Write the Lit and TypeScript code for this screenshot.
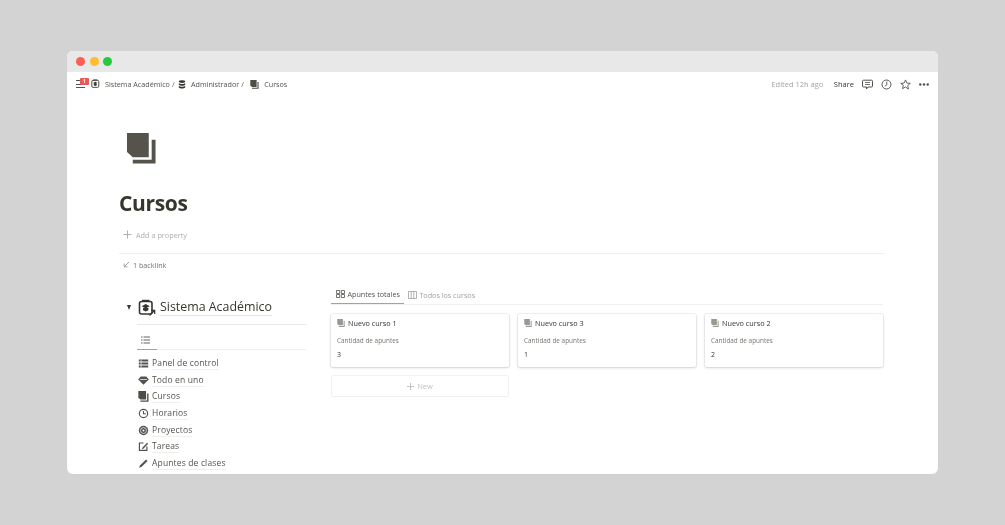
import { LitElement, html, css, svg } from "lit";
import { customElement } from "lit/decorators.js";

const copyIcon = (size: number, color: string) => html`<svg class="ic" width=${size} height=${size} viewBox="0 0 30 32" style="color:${color}"><path fill="currentColor" d="M0 0H22.500V25H6L0 19.500Z"/><path fill="currentColor" d="M25.500 7H29.500V31.500H6V27.500H25.500Z"/></svg>`;

const icons: Record<string, unknown> = {
  panel: svg`<path fill="currentColor" d="M1 2h12v2.400H1zM1 5.800h12v2.400H1zM1 9.600h12V12H1z"/><path fill="#fff" d="M3.500 2h.8v10h-.8z"/>`,
  todo: svg`<path fill="currentColor" d="M3.500 2h7L13.800 5.800 7 12.500 .2 5.800z"/><path fill="#fff" d="M2.500 5.400h9v.9h-9z"/>`,
  clock: svg`<circle cx="7" cy="7" r="5.300" fill="none" stroke="currentColor" stroke-width="1.500"/><path d="M7 3.800V7.300H10" fill="none" stroke="currentColor" stroke-width="1.300"/>`,
  target: svg`<circle cx="7" cy="7" r="6" fill="currentColor"/><circle cx="7" cy="7" r="3.800" fill="none" stroke="#fff" stroke-width=".9"/><circle cx="7" cy="7" r="1.300" fill="#fff"/>`,
  edit: svg`<path d="M7 2.500H1.800V12H11.300V7" fill="none" stroke="currentColor" stroke-width="1.500"/><path d="M5.500 8.600L11.500 2.200L12.900 3.500L6.900 9.800L5.200 10.200Z" fill="currentColor"/>`,
  pen: svg`<path d="M1.500 12.500L2.400 9.700L10.300 1.800L12.200 3.700L4.300 11.600Z" fill="currentColor"/>`,
};
const icon14 = (k: string) => html`<svg class="nav-ic" width="11" height="11" viewBox="0 0 14 14">${icons[k]}</svg>`;

const system = (size: number, arrow = false) => html`<svg class="ic" width=${size} height=${size} viewBox="0 0 18 18">
  <rect x="1.500" y="2.500" width="12.500" height="12.500" rx="2" fill="none" stroke="#37352f" stroke-width="1.600"/>
  <path d="M4 1.500h7.500" stroke="#37352f" stroke-width="1.400"/>
  <path d="M7.700 5l4 2.200-4 2.200-4-2.200z" fill="#37352f"/><path d="M5 9v2.200l2.700 1.300 2.700-1.300V9" fill="#37352f"/>
  ${arrow ? svg`<path d="M11.500 16.500L16.500 11.500M13 11.300h3.700V15" fill="none" stroke="#37352f" stroke-width="1.200"/>` : ""}
</svg>`;

const courses = [
  { name: "Nuevo curso 1", n: "3" },
  { name: "Nuevo curso 3", n: "1" },
  { name: "Nuevo curso 2", n: "2" },
];
const links = [
  { k: "panel", t: "Panel de control" },
  { k: "todo", t: "Todo en uno" },
  { k: "copy", t: "Cursos" },
  { k: "clock", t: "Horarios" },
  { k: "target", t: "Proyectos" },
  { k: "edit", t: "Tareas" },
  { k: "pen", t: "Apuntes de clases" },
];

@customElement("app-root")
export class AppRoot extends LitElement {
  static styles = css`
    :host { display: block; width: 1005px; height: 525px; background: #d3d3d3; padding: 51px 67px; box-sizing: border-box; font-family: "Open Sans", "Noto Sans", sans-serif; color: #37352f; overflow: hidden; }
    .window { width: 871px; height: 423px; background: #fff; border-radius: 6px; overflow: hidden; display: flex; flex-direction: column; }
    .ic, .nav-ic { display: block; flex: none; }
    .chrome { height: 21px; flex: none; background: #e8e8e8; display: flex; align-items: center; gap: 4.5px; padding-left: 9px; }
    .dot { width: 9px; height: 9px; border-radius: 50%; }
    .top { height: 24px; flex: none; display: flex; align-items: center; padding: 0 9px; font-size: 7.2px; position: relative; filter: blur(.3px); }
    .burger { width: 9px; height: 8px; display: flex; flex-direction: column; justify-content: space-between; margin-right: 6px; position: relative; }
    .burger i { display: block; height: 1px; background: #55534e; }
    .badge { position: absolute; left: 4px; top: -2.500px; width: 9px; height: 7px; background: #eb5757; border-radius: 1px; color: #fff; font-size: 5px; font-weight: 700; text-align: center; line-height: 7px; }
    .crumb { display: flex; align-items: center; white-space: nowrap; color: #55534e; }
    .crumb > .ic:first-child { margin-right: 4px; }
    .sep { margin: 0 3.400px 0 2px; color: #6b6b66; }
    .db { margin-right: 5px; }
    .cr { margin: 0 5px 0 3px; }
    .right { margin-left: auto; display: flex; align-items: center; color: #a3a29e; white-space: nowrap; font-size: 7.500px; }
    .share { color: #37352f; margin-left: 10.500px; margin-right: 8px; }
    .right svg { margin-right: 8px; }
    .right svg:last-child { margin-right: 0; }
    .page { flex: 1; min-height: 0; padding: 0 53px 0 52px; filter: blur(.3px); }
    .hero { padding-left: 7px; padding-top: 37px; }
    h1 { margin: 24px 0 0; font-size: 21px; letter-spacing: -.35px; line-height: 30px; font-weight: 700; color: #37352f; }
    .prop { margin: 7.500px 0 0 4px; height: 18px; display: flex; align-items: center; gap: 4px; font-size: 7.300px; color: #b0afab; }
    .divider { height: 1px; background: #efefee; margin-top: 9.500px; }
    .back { margin: 3.500px 0 0 4px; height: 14px; display: flex; align-items: center; gap: 3px; font-size: 7.200px; color: #73726d; }
    .cols { display: flex; margin-top: 13.500px; gap: 25px; }
    .left { width: 187px; flex: none; }
    .head { height: 21px; margin-top: 12px; display: flex; align-items: center; font-size: 12.400px; padding-left: 8px; }
    .tri { width: 0; height: 0; border-left: 2.500px solid transparent; border-right: 2.500px solid transparent; border-top: 5px solid #37352f; margin-right: 7px; }
    .head span.t { margin-left: 4px; border-bottom: 1px solid #e4e4e2; line-height: 16px; }
    .rule { height: 1px; background: #e8e8e7; margin: 6px 0 0 18px; }
    .tabline { margin-left: 18px; height: 25px; box-sizing: border-box; padding: 11px 0 0 4px; border-bottom: 1px solid #f0f0ef; position: relative; display: flex; align-items: flex-start; }
    .tabline::after { content: ""; position: absolute; left: 0; bottom: -1px; width: 20px; height: 1.500px; background: #a3a29e; }
    .nav { list-style: none; margin: 5px 0 0; padding: 0 0 0 19px; }
    .nav li { height: 16.700px; display: flex; align-items: center; gap: 3px; font-size: 8.500px; color: #55534e; letter-spacing: .15px; }
    .nav span { border-bottom: 1px solid #efefee; line-height: 12px; }
    .main { flex: 1; min-width: 0; margin-right: 2px; }
    .tabs { display: flex; height: 19px; border-bottom: 1px solid #f0f0ef; font-size: 7.200px; color: #a09f9b; }
    .tab { display: flex; align-items: center; gap: 2.500px; padding: 0 4px; height: 19px; box-sizing: border-box; }
    .tab.on { color: #55534e; border-bottom: 1.500px solid #a3a29e; padding-left: 5px; }
    .grid { display: grid; grid-template-columns: repeat(3, 178px); gap: 9px; margin-top: 9px; }
    .card { height: 52.500px; border-radius: 2px; box-shadow: 0 0 0 1px rgba(15,15,15,.06), 0 1px 3px rgba(15,15,15,.14); padding: 3px 6px; box-sizing: border-box; }
    .title { display: flex; align-items: center; gap: 3px; height: 11px; font-size: 7.250px; color: #37352f; }
    .label { font-size: 6.400px; color: #77766f; margin-top: 8px; line-height: 10px; }
    .val { font-size: 7px; color: #37352f; margin-top: 4px; line-height: 10px; }
    .new { width: 178px; height: 22px; margin-top: 8.500px; box-sizing: border-box; border: 1px solid #f0f0ef; border-radius: 2px; display: flex; align-items: center; justify-content: center; gap: 3px; font-size: 7.500px; color: #c4c3c0; }
  `;

  render() {
    return html`<div class="window">
      <div class="chrome">
        <div class="dot" style="background:#ff5f57"></div>
        <div class="dot" style="background:#febc2e"></div>
        <div class="dot" style="background:#28c840"></div>
      </div>
      <div class="top">
        <div class="burger"><i></i><i></i><i></i><div class="badge">1</div></div>
        <div class="crumb">
          ${system(10)}<span>Sistema Académico</span><span class="sep">/</span>
          <svg class="ic db" width="8" height="9" viewBox="0 0 10 10" preserveAspectRatio="none"><ellipse cx="5" cy="1.800" rx="4" ry="1.500" fill="#37352f"/><path d="M1 3.600c1.500 1 6.500 1 8 0v1.900c-1.500 1-6.500 1-8 0zM1 6.700c1.500 1 6.500 1 8 0v1.500c-1.500 1.500-6.500 1.500-8 0z" fill="#37352f"/></svg>
          <span>Administrador</span><span class="sep">/</span>
          <span class="cr">${copyIcon(9, "#4e4c46")}</span>
          <span>Cursos</span>
        </div>
        <div class="right">
          <span>Edited 12h ago</span><span class="share">Share</span>
          <svg width="11" height="11" viewBox="0 0 11 11"><path d="M1.500 1.200h8a1 1 0 0 1 1 1V7a1 1 0 0 1-1 1H6L4.500 10V8h-3a1 1 0 0 1-1-1V2.200a1 1 0 0 1 1-1z" fill="none" stroke="#55534e"/><path d="M3 3.500h5M3 5.500h5" stroke="#55534e" stroke-width=".8"/></svg>
          <svg width="11" height="11" viewBox="0 0 11 11"><circle cx="5.500" cy="5.500" r="4.500" fill="none" stroke="#55534e"/><path d="M5.800 2.500V5.800L3.800 7.300" fill="none" stroke="#55534e" stroke-width=".9"/></svg>
          <svg width="11" height="11" viewBox="0 0 12 12"><path d="M6 1l1.500 3.400 3.700.4-2.800 2.500.8 3.700L6 8.700l-3.200 1.800.8-3.700L.8 4.800l3.700-.4z" fill="none" stroke="#55534e"/></svg>
          <svg width="10" height="3" viewBox="0 0 10 3"><circle cx="1.300" cy="1.500" r="1.200" fill="#55534e"/><circle cx="5" cy="1.500" r="1.200" fill="#55534e"/><circle cx="8.700" cy="1.500" r="1.200" fill="#55534e"/></svg>
        </div>
      </div>
      <div class="page">
        <div class="hero">${copyIcon(31, "#55534c")}</div>
        <h1>Cursos</h1>
        <div class="prop"><svg width="9" height="9" viewBox="0 0 9 9"><path d="M4.500 .5v8M.5 4.500h8" stroke="#b0afab"/></svg>Add a property</div>
        <div class="divider"></div>
        <div class="back"><svg width="7" height="7" viewBox="0 0 7 7"><path d="M6 1L1.500 5.500M1.200 2.500V5.800H4.500" fill="none" stroke="#8f8e8a" stroke-width=".8"/></svg><span>1 backlink</span></div>
        <div class="cols">
          <div class="left">
            <div class="head"><div class="tri"></div>${system(18, true)}<span class="t">Sistema Académico</span></div>
            <div class="rule"></div>
            <div class="tabline"><svg width="9" height="8" viewBox="0 0 9 8"><path d="M0 1h1.500M0 4h1.500M0 7h1.500M2.500 1H9M2.500 4H9M2.500 7H9" stroke="#55534e" stroke-width=".9"/></svg></div>
            <ul class="nav">
              ${links.map((l) => html`<li>${l.k === "copy" ? copyIcon(11, "#4e4c46") : icon14(l.k)}<span>${l.t}</span></li>`)}
            </ul>
          </div>
          <div class="main">
            <div class="tabs">
              <div class="tab on"><svg width="9" height="8" viewBox="0 0 9 8"><path d="M.5.500h3.200v3H.5zM5.300.500h3.200v3H5.300zM.5 4.500h3.200v3H.5zM5.300 4.500h3.200v3H5.300z" fill="none" stroke="#55534e" stroke-width=".8"/></svg>Apuntes totales</div>
              <div class="tab"><svg width="9" height="8" viewBox="0 0 9 8"><path d="M.5.500h8v7h-8zM3.200.500v7M5.800.500v7" fill="none" stroke="#a09f9b" stroke-width=".8"/></svg>Todos los cursos</div>
            </div>
            <div class="grid">
              ${courses.map((c) => html`<div class="card">
                <div class="title">${copyIcon(8, "#9a9892")}<span>${c.name}</span></div>
                <div class="label">Cantidad de apuntes</div>
                <div class="val">${c.n}</div>
              </div>`)}
            </div>
            <div class="new"><svg width="7" height="7" viewBox="0 0 7 7"><path d="M3.500 0v7M0 3.500h7" stroke="#c4c3c0"/></svg>New</div>
          </div>
        </div>
      </div>
    </div>`;
  }
}
